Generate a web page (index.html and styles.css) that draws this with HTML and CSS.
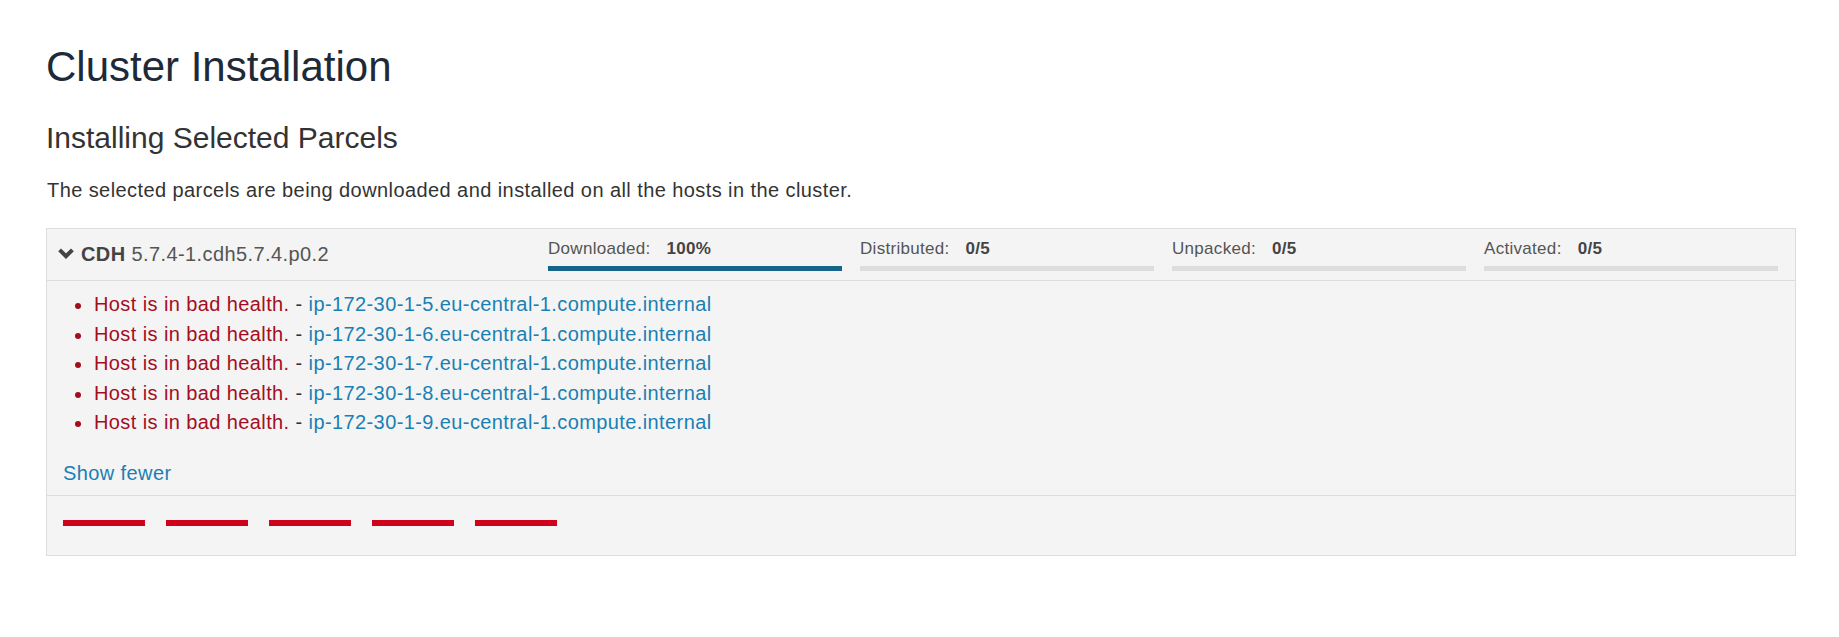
FILE: index.html
```html
<!DOCTYPE html>
<html lang="en">
<head>
<meta charset="utf-8">
<title>Cluster Installation</title>
<link rel="stylesheet" href="styles.css">
</head>
<body>
<div class="page">
  <h1 class="title">Cluster Installation</h1>
  <h2 class="subtitle">Installing Selected Parcels</h2>
  <p class="intro">The selected parcels are being downloaded and installed on all the hosts in the cluster.</p>

  <div class="panel">
    <div class="panel-head">
      <div class="parcel-name"><svg class="chevron" width="16" height="11" viewBox="0 0 16 11"><path d="M1.6 1.8 L8 8.2 L14.4 1.8" fill="none" stroke="#444" stroke-width="4" stroke-linecap="butt" stroke-linejoin="miter"/></svg><span class="product">CDH</span> 5.7.4-1.cdh5.7.4.p0.2</div>
      <div class="stage">
        <div class="stage-label">Downloaded:<span class="stage-value">100%</span></div>
        <div class="bar"><div class="bar-fill" style="width:100%"></div></div>
      </div>
      <div class="stage">
        <div class="stage-label">Distributed:<span class="stage-value">0/5</span></div>
        <div class="bar"><div class="bar-fill" style="width:0%"></div></div>
      </div>
      <div class="stage">
        <div class="stage-label">Unpacked:<span class="stage-value">0/5</span></div>
        <div class="bar"><div class="bar-fill" style="width:0%"></div></div>
      </div>
      <div class="stage">
        <div class="stage-label">Activated:<span class="stage-value">0/5</span></div>
        <div class="bar"><div class="bar-fill" style="width:0%"></div></div>
      </div>
    </div>

    <div class="panel-body">
      <ul class="errors">
        <li><span class="dot"></span><span class="err">Host is in bad health.</span> - <a class="host" href="#">ip-172-30-1-5.eu-central-1.compute.internal</a></li>
        <li><span class="dot"></span><span class="err">Host is in bad health.</span> - <a class="host" href="#">ip-172-30-1-6.eu-central-1.compute.internal</a></li>
        <li><span class="dot"></span><span class="err">Host is in bad health.</span> - <a class="host" href="#">ip-172-30-1-7.eu-central-1.compute.internal</a></li>
        <li><span class="dot"></span><span class="err">Host is in bad health.</span> - <a class="host" href="#">ip-172-30-1-8.eu-central-1.compute.internal</a></li>
        <li><span class="dot"></span><span class="err">Host is in bad health.</span> - <a class="host" href="#">ip-172-30-1-9.eu-central-1.compute.internal</a></li>
      </ul>
      <a class="toggle" href="#">Show fewer</a>
    </div>

    <div class="panel-foot">
      <span class="dash"></span>
      <span class="dash"></span>
      <span class="dash"></span>
      <span class="dash"></span>
      <span class="dash"></span>
    </div>
  </div>
</div>
</body>
</html>
```

FILE: styles.css
```css
html, body {
  margin: 0;
  padding: 0;
  background: #ffffff;
}

body {
  font-family: "Liberation Sans", Arial, Helvetica, sans-serif;
  color: #333333;
}

.page {
  padding: 44px 43px 0 46px;
}

.title {
  margin: 0;
  font-size: 42px;
  line-height: 46px;
  font-weight: normal;
  color: #1e2a37;
}

.subtitle {
  margin: 31px 0 0 0;
  font-size: 30px;
  line-height: 33px;
  font-weight: normal;
  color: #333333;
}

.intro {
  margin: 24px 0 26px 1px;
  font-size: 20px;
  line-height: 24px;
  letter-spacing: 0.42px;
  color: #333333;
}

.panel {
  border: 1px solid #dddddd;
  background: #f4f4f4;
}

.panel-head {
  display: grid;
  grid-template-columns: minmax(0, 1fr) 294px 294px 294px 294px;
  column-gap: 18px;
  align-items: start;
  padding: 10px 17px 9px 11px;
  border-bottom: 1px solid #dddddd;
}

.parcel-name {
  margin-top: 3px;
  font-size: 20px;
  line-height: 24px;
  letter-spacing: 0.4px;
  color: #555555;
  white-space: nowrap;
}

.chevron {
  display: inline-block;
  vertical-align: 2px;
  margin: 0 7px 0 0;
}

.product {
  font-weight: bold;
  color: #444444;
}

.stage-label {
  font-size: 17px;
  line-height: 20px;
  letter-spacing: 0.3px;
  color: #555555;
  white-space: nowrap;
}

.stage-value {
  margin-left: 16px;
  font-weight: bold;
  color: #444444;
}

.bar {
  margin-top: 7px;
  height: 5px;
  background: #dddddd;
}

.bar-fill {
  height: 100%;
  background: #17648a;
}

.panel-body {
  padding: 9px 16px 10px 16px;
  border-bottom: 1px solid #dddddd;
}

.errors {
  list-style: none;
  margin: 0;
  padding: 0 0 0 12px;
  font-size: 20px;
  line-height: 29.5px;
  letter-spacing: 0.4px;
  color: #333333;
}

.errors li {
  white-space: nowrap;
}

.dot {
  display: inline-block;
  width: 6px;
  height: 6px;
  border-radius: 50%;
  background: #a50d1f;
  vertical-align: 2px;
  margin-right: 13px;
}

.err {
  color: #a50d1f;
}

.host {
  color: #1a80b3;
  text-decoration: none;
}

.toggle {
  display: block;
  margin-top: 23px;
  font-size: 20px;
  line-height: 24px;
  letter-spacing: 0.4px;
  color: #1a80b3;
  text-decoration: none;
}

.panel-foot {
  display: flex;
  gap: 21px;
  padding: 24px 16px 29px 16px;
}

.dash {
  display: block;
  width: 82px;
  height: 6px;
  background: #d0021b;
}
```
